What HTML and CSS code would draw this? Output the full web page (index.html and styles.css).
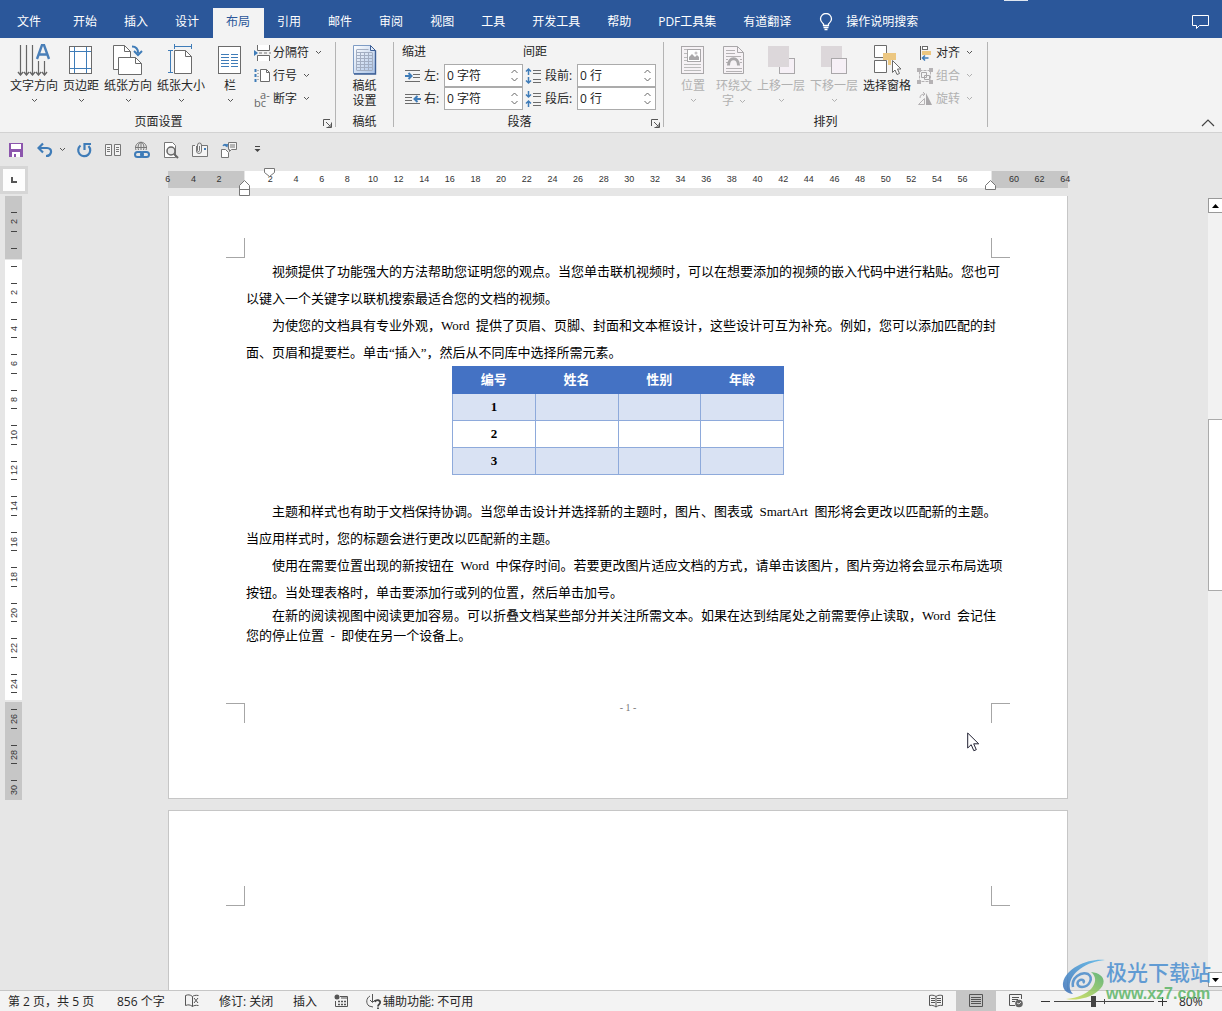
FILE: index.html
```html
<!DOCTYPE html>
<html lang="zh-CN">
<head>
<meta charset="utf-8">
<title>文档 - 布局</title>
<link rel="stylesheet" href="styles.css">
</head>
<body>
<svg class="defs" aria-hidden="true">
  <symbol id="chev" viewBox="0 0 7 5"><path d="M1 1l2.500 2.500L6 1" fill="none" stroke="currentColor"/></symbol>
  <symbol id="up" viewBox="0 0 7 5"><path d="M0.500 4l3-3 3 3" fill="none" stroke="currentColor"/></symbol>
  <symbol id="down" viewBox="0 0 7 5"><path d="M0.500 1l3 3 3-3" fill="none" stroke="currentColor"/></symbol>
  <symbol id="launch" viewBox="0 0 9 9"><path d="M0.500 7V0.500H7M3 3l4 4M8.500 3.500v5h-5M8 5v3H5" fill="none" stroke="#555"/></symbol>
</svg>

<header class="tabs">
  <nav class="tablist">
    <button class="tab file">文件</button>
    <button class="tab">开始</button>
    <button class="tab">插入</button>
    <button class="tab">设计</button>
    <button class="tab active">布局</button>
    <button class="tab">引用</button>
    <button class="tab">邮件</button>
    <button class="tab">审阅</button>
    <button class="tab">视图</button>
    <button class="tab">工具</button>
    <button class="tab">开发工具</button>
    <button class="tab">帮助</button>
    <button class="tab">PDF工具集</button>
    <button class="tab">有道翻译</button>
    <button class="tab tell"><svg width="14" height="18" viewBox="0 0 14 18"><path d="M4.500 12.500V11C3 9.500 1.500 8.500 1.500 6a5.500 5.500 0 0 1 11 0c0 2.500-1.500 3.500-3 5v1.500zM4.500 14.500h5M5.500 16.500h3" fill="none" stroke="#fff" stroke-width="1.300"/></svg>操作说明搜索</button>
  </nav>
  <button class="comment" aria-label="批注"><svg width="17" height="16" viewBox="0 0 17 16"><path d="M.500 1.500h16v10h-9l-3 3v-3h-4z" fill="none" stroke="#fff"/></svg></button>
  <span class="handle"></span>
</header>

<section class="ribbon">
  <div class="group setup">
    <div class="body">
      <button class="big"><svg width="34" height="32" viewBox="0 0 34 32"><g fill="none" stroke="#666"><path d="M3.500 1v30M9.500 1v30M15.500 1v30M21.500 17v14M27.500 17v14" stroke-width="1.200"/><path d="M1 28l2.500 3L6 28M7 28l2.500 3 2.500-3M13 28l2.500 3 2.500-3M19 28l2.500 3 2.500-3M25 28l2.500 3 2.500-3" stroke-width="1.400"/></g><path d="M20 15l5-14h2l5 14M22 10.500h8" fill="none" stroke="#4a7fb8" stroke-width="2.400"/></svg><span>文字方向</span><svg class="ch"><use href="#chev"/></svg></button>
      <button class="big"><svg width="24" height="32" viewBox="0 0 24 32"><rect x=".5" y="2.500" width="22" height="27" fill="#fff" stroke="#6b6b6b"/><path d="M5.500 3v26M17.500 3v26M1 7.500h21M1 24.500h21" stroke="#3f7cb8"/></svg><span>页边距</span><svg class="ch"><use href="#chev"/></svg></button>
      <button class="big"><svg width="30" height="32" viewBox="0 0 30 32"><g fill="#fff" stroke="#6b6b6b"><path d="M.500 1.500h11l6 6v18H.500z"/><path d="M11.500 1.500v6h6" fill="none"/><path d="M5.500 13.500h17l6 6v11h-23z"/><path d="M22.500 13.500v6h6" fill="none"/></g><path d="M19 2.500c4 0 6 1.500 6 6.500" fill="none" stroke="#3f7cb8" stroke-width="2"/><path d="M21 7l4 4 4-4" fill="none" stroke="#3f7cb8" stroke-width="2"/></svg><span>纸张方向</span><svg class="ch"><use href="#chev"/></svg></button>
      <button class="big"><svg width="26" height="32" viewBox="0 0 26 32"><path d="M6 2.500h18M6.500 0v5M23.500 0v5M2.500 6v22M0 6.500h5M0 28.500h5" stroke="#3f7cb8"/><path d="M6.500 6.500h11l6 6v17h-17z" fill="#fff" stroke="#6b6b6b"/><path d="M17.500 6.500v6h6" fill="none" stroke="#6b6b6b"/></svg><span>纸张大小</span><svg class="ch"><use href="#chev"/></svg></button>
      <button class="big narrow"><svg width="24" height="32" viewBox="0 0 24 32"><rect x=".5" y="2.500" width="22" height="27" fill="#fff" stroke="#6b6b6b"/><path d="M3 10.500h8M13 10.500h7M3 13.500h8M13 13.500h7M3 16.500h8M13 16.500h7M3 19.500h8M13 19.500h7M3 22.500h8M13 22.500h7" stroke="#3f7cb8"/></svg><span>栏</span><svg class="ch"><use href="#chev"/></svg></button>
      <div class="smalls">
        <button class="small"><svg width="17" height="16" viewBox="0 0 17 16"><path d="M3.500 0v5.500h12V0M3.500 16v-5.500h12V16" fill="#fff" stroke="#6b6b6b"/><path d="M0 5v6l4-3z" fill="#3f7cb8"/><path d="M5 8h3M10 8h3M15 8h2" stroke="#777"/></svg>分隔符<svg class="ch"><use href="#chev"/></svg></button>
        <button class="small"><svg width="17" height="16" viewBox="0 0 17 16"><path d="M6.500 1.500h6l3 3v9h-9z" fill="#fff" stroke="#6b6b6b"/><path d="M12.500 1.500v3h3" fill="none" stroke="#6b6b6b"/><path d="M1.500 1v14" stroke="#3f7cb8" stroke-dasharray="3 2" stroke-width="2"/><path d="M4 2v12" stroke="#777" stroke-dasharray="1 2"/></svg>行号<svg class="ch"><use href="#chev"/></svg></button>
        <button class="small"><span class="hyph" aria-hidden="true"><span>a-</span><span>bc</span></span>断字<svg class="ch"><use href="#chev"/></svg></button>
      </div>
    </div>
    <footer>页面设置<button class="launch" aria-label="页面设置选项"><svg width="9" height="9"><use href="#launch"/></svg></button></footer>
  </div>
  <div class="group paper">
    <div class="body">
      <button class="big"><svg width="26" height="32" viewBox="0 0 26 32"><defs><linearGradient id="pg" x1="0" y1="0" x2="1" y2="1"><stop offset="0" stop-color="#fff"/><stop offset="1" stop-color="#a9c2e6"/></linearGradient></defs><path d="M1.500 1.500h17l5 5v23h-22z" fill="url(#pg)" stroke="#7f9cc4"/><path d="M23.500 6.500v23.500H2" fill="none" stroke="#3d5f96" stroke-width="1.400"/><path d="M18.500 1.500v5h5z" fill="#dfe9f7" stroke="#3d5f96"/><path d="M4.500 5.500h12M4.500 8.500h16M4.500 11.500h16M4.500 14.500h16M4.500 17.500h16M4.500 20.500h16M4.500 23.500h16M4.500 26.500h16M4.500 6v20M8.500 9v17M12.500 9v17M16.500 9v17M20.500 9v17" stroke="#a3aec2" fill="none"/></svg><span>稿纸<br>设置</span></button>
    </div>
    <footer>稿纸</footer>
  </div>
  <div class="group para">
    <div class="body">
      <div class="spin-col">
        <h3>缩进</h3>
        <div class="spin-row"><svg width="18" height="16" viewBox="0 0 18 16"><path d="M1 2.500h15M9 6.500h7M9 9.500h7M1 13.500h15" stroke="#6b6b6b"/><path d="M1 8h6M4.500 5l3 3-3 3" fill="none" stroke="#3f7cb8" stroke-width="2"/></svg><label for="il">左:</label><span class="spin"><input id="il" value="0 字符"><span><svg><use href="#up"/></svg><svg><use href="#down"/></svg></span></span></div>
        <div class="spin-row"><svg width="18" height="16" viewBox="0 0 18 16"><path d="M1 3.500h15M1 6.500h7M1 9.500h7M1 12.500h15" stroke="#6b6b6b"/><path d="M17 8h-6M13.500 5l-3 3 3 3" fill="none" stroke="#3f7cb8" stroke-width="2"/></svg><label for="ir">右:</label><span class="spin"><input id="ir" value="0 字符"><span><svg><use href="#up"/></svg><svg><use href="#down"/></svg></span></span></div>
      </div>
      <div class="spin-col wide">
        <h3>间距</h3>
        <div class="spin-row"><svg width="18" height="18" viewBox="0 0 18 18"><path d="M8 3.500h8M8 6.500h8M8 12.500h8M8 15.500h8" stroke="#6b6b6b"/><path d="M3.500 8V2M1 4.500L3.500 2 6 4.500M3.500 10v6M1 13.500L3.500 16 6 13.500" fill="none" stroke="#3f7cb8" stroke-width="1.500"/></svg><label for="sb">段前:</label><span class="spin"><input id="sb" value="0 行"><span><svg><use href="#up"/></svg><svg><use href="#down"/></svg></span></span></div>
        <div class="spin-row"><svg width="18" height="18" viewBox="0 0 18 18"><path d="M8 3.500h8M8 6.500h8M8 12.500h8M8 15.500h8" stroke="#6b6b6b"/><path d="M3.500 1v6M1 4.500L3.500 7 6 4.500M3.500 17v-6M1 13.500L3.500 11 6 13.500" fill="none" stroke="#3f7cb8" stroke-width="1.500"/></svg><label for="sa">段后:</label><span class="spin"><input id="sa" value="0 行"><span><svg><use href="#up"/></svg><svg><use href="#down"/></svg></span></span></div>
      </div>
    </div>
    <footer>段落<button class="launch" aria-label="段落选项"><svg width="9" height="9"><use href="#launch"/></svg></button></footer>
  </div>
  <div class="group arrange">
    <div class="body">
      <button class="big" disabled><svg width="24" height="32" viewBox="0 0 24 32"><rect x=".5" y="2.500" width="22" height="27" fill="#f6f2f5" stroke="#a9a7a9"/><path d="M3 5.500h3M17 5.500h3M3 20.500h17M3 23.500h17M3 26.500h17M3 9.500h3M3 13.500h3M3 16.500h3" stroke="#bbb"/><rect x="6.500" y="5.500" width="13" height="12" fill="#fff" stroke="#a9a7a9"/><path d="M8 16v-3l3-3 3 3 2-2 2 2v3z" fill="#a9a7a9"/><circle cx="15" cy="9" r="1.500" fill="#c5c2c4"/></svg><span>位置</span><svg class="ch"><use href="#chev"/></svg></button>
      <button class="big" disabled><svg width="24" height="32" viewBox="0 0 24 32"><path d="M1.500 2.500h14l6 6v21h-20z" fill="#f6f2f5" stroke="#a9a7a9"/><path d="M15.500 2.500v6h6" fill="none" stroke="#a9a7a9"/><path d="M4 6.500h9M4 9.500h9M4 12.500h15M4 15.500h2M18 15.500h2M4 18.500h2M18 18.500h2M4 24.500h16M4 27.500h16" stroke="#b5b2b4"/><path d="M6.500 21.500c0-9 10-9 10 0" fill="none" stroke="#a9a7a9" stroke-width="3"/></svg><span>环绕文<br>字 <svg class="ch"><use href="#chev"/></svg></span></button>
      <button class="big" disabled><svg width="28" height="32" viewBox="0 0 28 32"><rect x="12.500" y="14.500" width="15" height="15" fill="#f6f0f6" stroke="#a9a7a9"/><path d="M1 2h21v21H1z" fill="#dcd7da"/></svg><span>上移一层</span><svg class="ch"><use href="#chev"/></svg></button>
      <button class="big" disabled><svg width="28" height="32" viewBox="0 0 28 32"><path d="M1 2h21v21H1z" fill="#dcd7da"/><rect x="11.500" y="14.500" width="15" height="15" fill="#f6f0f6" stroke="#a9a7a9"/></svg><span>下移一层</span><svg class="ch"><use href="#chev"/></svg></button>
      <button class="big"><svg width="28" height="32" viewBox="0 0 28 32"><path d="M1.500 1.500h12v12h-12zM1.500 16.500h12v12h-12z" fill="#fff" stroke="#6b6b6b"/><path d="M10 9h13v7h-5v5h-3v-5h-5z" fill="#ecc781"/><path d="M19.500 16.500v12l2.500-2.500 2 4.500 2.500-1-2-4.500h3.500z" fill="#fff" stroke="#6b6b6b"/></svg><span>选择窗格</span></button>
      <div class="smalls">
        <button class="small"><svg width="17" height="16" viewBox="0 0 17 16"><path d="M3.500 1v14" stroke="#555"/><rect x="5.500" y="1.500" width="5" height="3" fill="#fff" stroke="#6b6b6b"/><path d="M5 6h9v4H5z" fill="#ecc781"/><path d="M5.500 13h6M8 10.500L5.500 13 8 15.500" fill="none" stroke="#3f7cb8" stroke-width="1.500"/></svg>对齐<svg class="ch"><use href="#chev"/></svg></button>
        <button class="small" disabled><svg width="17" height="16" viewBox="0 0 17 16"><path d="M2.500 2.500h11v11h-11z" fill="none" stroke="#b5b2b4" stroke-dasharray="3 1"/><path d="M4.500 4.500h5v5h-5zM7.500 7.500h5v4h-5z" fill="#f3f3f3" stroke="#a9a7a9"/><path d="M0 0h4v4H0zM12 0h4v4h-4zM0 12h4v4H0zM12 12h4v4h-4z" fill="#b5b2b4"/></svg>组合<svg class="ch"><use href="#chev"/></svg></button>
        <button class="small" disabled><svg width="17" height="16" viewBox="0 0 17 16"><path d="M1.500 13.500h6v-6zM3 7c0-3 2-4 5-4M6 1l2 2-2 2" fill="none" stroke="#b5b2b4"/><path d="M9 2v12h6z" fill="#a9a7a9"/></svg>旋转<svg class="ch"><use href="#chev"/></svg></button>
      </div>
    </div>
    <footer>排列</footer>
  </div>
  <button class="collapse" aria-label="折叠功能区"><svg width="14" height="8" viewBox="0 0 14 8"><path d="M1 7l6-6 6 6" fill="none" stroke="#444" stroke-width="1.200"/></svg></button>
</section>

<div class="qat">
  <button aria-label="保存"><svg width="16" height="16" viewBox="0 0 16 16"><path d="M1 1h14v14H1z" fill="#8c56ad"/><path d="M3 2h10v5H3zM4 10h8v5H4z" fill="#fff"/><path d="M6 12h2v3H6z" fill="#8c56ad"/></svg></button>
  <button aria-label="撤消"><svg width="16" height="16" viewBox="0 0 16 16"><path d="M2 6h8c6 0 5 8-1 8M6 1.500L1.500 6 6 10.500" fill="none" stroke="#3f7cb8" stroke-width="2.200"/></svg></button>
  <button class="mini" aria-label="撤消列表"><svg class="ch"><use href="#chev"/></svg></button>
  <button class="redo" aria-label="重复"><svg width="16" height="16" viewBox="0 0 16 16"><path d="M4.500 3.500A6 6 0 1 0 12.500 4M8.500 8V2H15" fill="none" stroke="#3f7cb8" stroke-width="2.200"/></svg></button>
  <button aria-label="双页"><svg width="16" height="16" viewBox="0 0 16 16"><path d="M.500 2.500h6v11h-6zM9.500 2.500h6v11h-6z" fill="#f4f4f4" stroke="#777"/><path d="M2 5.500h3M2 7.500h3M2 9.500h3M11 5.500h3M11 7.500h3M11 9.500h3" stroke="#777"/></svg></button>
  <button aria-label="超链接"><svg width="16" height="18" viewBox="0 0 16 18"><g fill="none"><path d="M2 9a5.500 5.500 0 1 1 10 0M7 1v8M1 6.500h12M4.500 9c-1-4 0-7 2.500-7.500C9.500 2 10.500 5 9.500 9" stroke="#777"/><rect x="1" y="11" width="8" height="5" rx="2.500" stroke="#3f7cb8" stroke-width="2"/><rect x="7" y="11" width="8" height="5" rx="2.500" stroke="#3f7cb8" stroke-width="2"/></g></svg></button>
  <button aria-label="打印预览"><svg width="16" height="18" viewBox="0 0 16 18"><path d="M1.500 1.500h8l3 3v12h-11z" fill="#fff" stroke="#777"/><circle cx="8" cy="10" r="4" fill="#e6e6e6" stroke="#666" stroke-width="1.500"/><path d="M11 13l4 4" stroke="#666" stroke-width="2"/></svg></button>
  <button aria-label="附件"><svg width="16" height="16" viewBox="0 0 16 16"><path d="M3 3.500H.500v11h15v-11H10" fill="#f4f4f4" stroke="#777"/><path d="M4.500 4v5a2.500 2.500 0 0 0 5 0V3a2 2 0 0 0-4 0v5.500a1 1 0 0 0 2 0V4" fill="none" stroke="#777"/><path d="M12 6h2v2h-2z" fill="#3f7cb8"/></svg></button>
  <button aria-label="切换"><svg width="16" height="16" viewBox="0 0 16 16"><path d="M7.500.500h8v7h-5l-2 2v-2h-1z" fill="#f4f4f4" stroke="#777"/><path d="M9 3h5M9 5h5" stroke="#777"/><path d="M.500 7.500h4l3 3v5h-7z" fill="#fff" stroke="#777"/><path d="M2 4c1-2 3-2 4 0M3.500 3L6 4.500 6.500 2" fill="none" stroke="#3f7cb8" stroke-width="1.300"/></svg></button>
  <button class="more" aria-label="自定义快速访问工具栏"><svg width="7" height="7" viewBox="0 0 7 7"><path d="M1 .500h5" stroke="#444"/><path d="M.500 3h6l-3 3z" fill="#444"/></svg></button>
</div>

<main class="work">
  <button class="corner" aria-label="制表符"><svg width="6" height="6"><path d="M1 0v5h5" fill="none" stroke="#555" stroke-width="2"/></svg></button>
  <div class="hwrap">
    <div class="hruler">
      <div class="hseg"><i></i><b></b><i></i></div>
      <div class="hnums"><span>6</span><span>4</span><span>2</span><span></span><span>2</span><span>4</span><span>6</span><span>8</span><span>10</span><span>12</span><span>14</span><span>16</span><span>18</span><span>20</span><span>22</span><span>24</span><span>26</span><span>28</span><span>30</span><span>32</span><span>34</span><span>36</span><span>38</span><span>40</span><span>42</span><span>44</span><span>46</span><span>48</span><span>50</span><span>52</span><span>54</span><span>56</span><span></span><span>60</span><span>62</span><span>64</span></div>
      <svg class="mark first" width="11" height="9" viewBox="0 0 11 9"><path d="M.500.500h10v4l-5 4-5-4z" fill="#fff" stroke="#777"/></svg>
      <svg class="mark hang" width="11" height="16" viewBox="0 0 11 16"><path d="M.500 15.500v-10l5-5 5 5v10zM.500 9.500h10" fill="#fff" stroke="#777"/></svg>
      <svg class="mark right" width="11" height="10" viewBox="0 0 11 10"><path d="M.500 9.500v-4l5-5 5 5v4z" fill="#fff" stroke="#777"/></svg>
    </div>
  </div>
  <div class="vruler"><div class="vnums"><div><span>2</span></div><div></div><div><span>2</span></div><div><span>4</span></div><div><span>6</span></div><div><span>8</span></div><div><span>10</span></div><div><span>12</span></div><div><span>14</span></div><div><span>16</span></div><div><span>18</span></div><div><span>20</span></div><div><span>22</span></div><div><span>24</span></div><div><span>26</span></div><div><span>28</span></div><div><span>30</span></div></div></div>
  <div class="pages">
    <article class="page one">
      <div class="crops top"><i></i><i></i></div>
      <div class="text">
        <p>视频提供了功能强大的方法帮助您证明您的观点。当您单击联机视频时，可以在想要添加的视频的嵌入代码中进行粘贴。您也可<br>以键入一个关键字以联机搜索最适合您的文档的视频。</p>
        <p>为使您的文档具有专业外观，Word&ensp;提供了页眉、页脚、封面和文本框设计，这些设计可互为补充。例如，您可以添加匹配的封<br>面、页眉和提要栏。单击“插入”，然后从不同库中选择所需元素。</p>
        <table>
          <thead><tr><th>编号</th><th>姓名</th><th>性别</th><th>年龄</th></tr></thead>
          <tbody>
            <tr><th>1</th><td></td><td></td><td></td></tr>
            <tr><th>2</th><td></td><td></td><td></td></tr>
            <tr><th>3</th><td></td><td></td><td></td></tr>
          </tbody>
        </table>
        <p>主题和样式也有助于文档保持协调。当您单击设计并选择新的主题时，图片、图表或&ensp;SmartArt&ensp;图形将会更改以匹配新的主题。<br>当应用样式时，您的标题会进行更改以匹配新的主题。</p>
        <p>使用在需要位置出现的新按钮在&ensp;Word&ensp;中保存时间。若要更改图片适应文档的方式，请单击该图片，图片旁边将会显示布局选项<br>按钮。当处理表格时，单击要添加行或列的位置，然后单击加号。</p>
        <p class="tight">在新的阅读视图中阅读更加容易。可以折叠文档某些部分并关注所需文本。如果在达到结尾处之前需要停止读取，Word&ensp;会记住<br>您的停止位置&ensp;-&ensp;即使在另一个设备上。</p>
      </div>
      <div class="crops bottom"><i></i><span>- 1 -</span><i></i></div>
    </article>
    <article class="page two"><div class="crops top"><i></i><i></i></div></article>
    <svg class="pointer" width="13" height="20" viewBox="0 0 13 20"><path d="M.700 1v15l3.500-3.300 2.600 6 2.500-1-2.600-5.900h5z" fill="#fff" stroke="#223"/></svg>
  </div>
  <div class="scroll">
    <button aria-label="向上滚动"><svg width="7" height="4"><path d="M0 4l3.500-4L7 4z"/></svg></button>
    <div class="track"><i class="before"></i><i class="thumb"></i><i class="after"></i></div>
    <button aria-label="向下滚动"><svg width="7" height="4"><path d="M0 0l3.500 4L7 0z"/></svg></button>
  </div>
  <div class="brand">
    <svg width="44" height="42" viewBox="0 0 44 42"><defs><linearGradient id="g1" x1="0" y1="1" x2="1" y2="0"><stop offset="0" stop-color="#3c6fb6"/><stop offset="1" stop-color="#55b7ea"/></linearGradient><linearGradient id="g2" x1="0" y1="1" x2="1" y2="0"><stop offset="0" stop-color="#d5e04f"/><stop offset="1" stop-color="#4fae6d"/></linearGradient></defs><path d="M43 1C28-1 4 8 1 24c-1 7 5 11 10 11-7-7-2-19 7-25C26 4 34 2 43 1z" fill="url(#g1)"/><path d="M29 13c13 1 17 11 7 19C28 39 14 42 4 40c12-1 20-5 25-10 5-6 6-12 0-17z" fill="url(#g2)"/><path d="M11 28c-2-9 8-16 15-13 6 4 1 13-6 13-5 0-6-5-2-7 3-1 5 1 3 3" fill="none" stroke="#4a8ccb" stroke-width="2.500"/></svg>
    <div><strong>极光下载站</strong><a href="#">www.xz7.com</a></div>
  </div>
</main>

<footer class="status">
  <span class="s-page">第 2 页，共 5 页</span>
  <span class="s-words">856 个字</span>
  <svg width="15" height="14" viewBox="0 0 15 14"><path d="M7.500 2.500C5 .500 3 .500.500 1.500v10c2.500-1 4.500-1 7 1 1.500-1 3-1.500 6-1M7.500 2.500v10M7.500 2.500c1-1 3-1.500 6-1M9 4l4 5M13 4L9 9" fill="none" stroke="#555"/></svg>
  <span class="s-track">修订: 关闭</span>
  <span class="s-ins">插入</span>
  <svg width="14" height="14" viewBox="0 0 14 14"><circle cx="3" cy="3" r="2.500" fill="#555"/><path d="M6 2.500h7.500v10H1.500V7M7 4h6" fill="none" stroke="#555"/><path d="M4 7.500h8M4 10.500h8" stroke="#555" stroke-width="1.500" stroke-dasharray="2 1"/></svg>
  <span class="s-acc"><svg width="17" height="15" viewBox="0 0 17 15"><path d="M5 2A6 6 0 0 0 4 12l4 1M7.500 0v8M5 6l2.500 2.500L10 6" fill="none" stroke="#555"/><path d="M10 8c1-3 6-2 5 1-.500 1.500-2 1.500-2 3.500M13 13.500v1.500" fill="none" stroke="#444" stroke-width="1.800"/></svg>辅助功能: 不可用</span>
  <div class="views">
    <button aria-label="阅读视图"><svg width="14" height="14" viewBox="0 0 14 14"><path d="M7 2.500C5 1 3 1 .500 1.500v10c2.500-.500 4.500 0 6.500 1.500 2-1.500 4-2 6.500-1.500v-10C11 1 9 1 7 2.500zM7 2.500V13M2 4.500h4M2 6.500h4M2 8.500h4M8 4.500h4M8 6.500h4M8 8.500h4" fill="none" stroke="#555"/></svg></button>
    <button class="on" aria-label="页面视图"><svg width="14" height="14" viewBox="0 0 14 14"><path d="M.500.500h13v12H.500zM2 3.500h10M2 5.500h10M2 7.500h10M2 9.500h10" fill="none" stroke="#555"/></svg></button>
    <button aria-label="Web 版式视图"><svg width="14" height="14" viewBox="0 0 14 14"><path d="M6 11.500H.500V.500h12V5M3 3.500h7M3 5.500h6M3 7.500h3" fill="none" stroke="#555"/><circle cx="10" cy="9.500" r="3.800" fill="#666"/><path d="M8 9l2 1 2-2" stroke="#ddd" fill="none"/></svg></button>
  </div>
  <button class="zoom" aria-label="缩小"><svg width="9" height="9"><path d="M0 4.500h9" stroke="#333"/></svg></button>
  <input class="slider" type="range" min="0" max="100" value="39" aria-label="显示比例">
  <button class="zoom" aria-label="放大"><svg width="9" height="9"><path d="M0 4.500h9M4.500 0v9" stroke="#333"/></svg></button>
  <span class="pct">80%</span>
</footer>
</body>
</html>
```
FILE: styles.css
```css
* { box-sizing: border-box; }
html, body { margin: 0; height: 100%; }
body {
  display: flex; flex-direction: column; min-height: 100vh; overflow: hidden;
  font: 12px/15px "Open Sans", "Noto Sans CJK SC", sans-serif;
  color: #262626; background: #e6e6e6;
}
button { font: inherit; color: inherit; background: none; border: 0; padding: 0; margin: 0; }
svg { display: block; flex: none; }
.defs { position: absolute; width: 0; height: 0; }
.ch { width: 7px; height: 5px; color: #555; }

/* tabs */
.tabs { position: relative; display: flex; justify-content: space-between; height: 38px; background: #2b579a; color: #fff; }
.tablist { display: flex; padding-top: 8px; white-space: nowrap; }
.tab { padding: 0 14px 3px 13px; }
.tab.file { padding: 0 19px 3px 17px; }
.tab.active { background: #f3f3f3; color: #2b579a; }
.tab.tell { display: flex; align-items: center; gap: 13px; padding-left: 14px; }
.comment { padding: 6px 13px 0 0; }
.handle { position: absolute; right: 194px; top: 0; width: 24px; height: 1px; background: #dfe6f0; }

/* ribbon */
.ribbon { display: flex; padding: 4px 0 5px; background: #f3f3f3; border-bottom: 1px solid #d2d2d2; }
.group { display: flex; flex-direction: column; border-right: 1px solid #b4b4b4; flex: none; }
.group footer { display: flex; justify-content: center; line-height: 14px; position: relative; height: 12px; }
.body { display: flex; height: 73px; padding-top: 2px; }
.setup { width: 336px; }
.paper { width: 58px; }
.para { width: 270px; }
.arrange { width: 324px; }
.setup .body { padding-left: 8px; gap: 1px; }
.paper .body { justify-content: center; }
.para .body { padding-left: 8px; }
.arrange .body { padding-left: 9px; gap: 1px; }
.setup footer, .para footer { padding-right: 18px; }
.launch { position: absolute; right: 3px; bottom: -1px; }
.big { display: flex; flex-direction: column; align-items: center; padding: 0 2px; min-width: 40px; white-space: nowrap; }
.big > svg:first-child { margin-bottom: 2px; }
.big > .ch { margin-top: 5px; }
.big span .ch { display: inline-block; vertical-align: middle; margin-left: 2px; }
.big.narrow { min-width: 44px; }
button:disabled, button:disabled .ch { color: #b1b1b1; }
.smalls { display: flex; flex-direction: column; padding-left: 1px; margin-top: -3px; }
.arrange .smalls { padding-left: 3px; }
.small { display: flex; align-items: center; height: 23px; gap: 2px; }
.small .ch { margin-left: 4px; }
.hyph { display: flex; flex-direction: column; width: 17px; font: 11px/8px "Open Sans", sans-serif; color: #666; text-align: left; }
.hyph span:first-child { padding-left: 6px; }
h3 { margin: 0 0 5px; font: inherit; }
.spin-row { display: flex; align-items: center; gap: 2px; height: 23px; padding-left: 2px; }
.spin-row label { width: 18px; white-space: nowrap; }
.wide .spin-row label { width: 30px; }
.spin { display: flex; width: 79px; height: 23px; border: 1px solid #ababab; background: #fff; }
.spin input { flex: 1; min-width: 0; border: 0; padding: 0 0 0 2px; background: none; font: inherit; color: #222; outline: 0; }
.spin > span { display: flex; flex-direction: column; justify-content: space-around; padding: 2px 4px 2px 0; color: #666; }
.spin svg { width: 7px; height: 5px; }
.collapse { margin: auto 7px 0 auto; }

/* quick access toolbar */
.qat { display: flex; align-items: center; height: 33px; padding-left: 8px; gap: 13px; flex: none; }
.mini { margin: 0 -3px 0 -7px; }
.more { margin-left: 4px; }

/* work area */
.work { position: relative; flex: 1; min-height: 0; display: grid; grid-template: 30px minmax(0, 1fr) / 28px 1fr 14px; }
.corner { width: 28px; height: 28px; border: 3px solid #d6d6d6; background: #fdfdfd; display: grid; place-content: center; }
.hwrap { display: flex; justify-content: center; padding-top: 5px; }
.hruler { position: relative; width: 900px; height: 17px; display: grid; }
.hseg, .hnums { grid-area: 1 / 1; }
.hseg { display: flex; gap: 1px; }
.hseg i { width: 76px; background: #c6c6c6; }
.hseg b { flex: 1; background: #fff; }
.hnums { display: grid; grid-template-columns: repeat(36, 1fr); margin: 0 -10px 0 -13px; text-align: center; font: 9px/17px "Liberation Sans", sans-serif; color: #333; }
.mark { position: absolute; }
.first { left: 96px; top: -3px; }
.hang { left: 71px; top: 9px; }
.right { right: 72px; top: 9px; }
.vruler { grid-row: 2; grid-column: 1; width: 17px; height: 604px; margin-left: 5px; padding-top: 8px; overflow: hidden; background: linear-gradient(#c6c6c6 63px, #e6e6e6 63px 64px, #fff 64px 504px, #e6e6e6 504px 506px, #c6c6c6 506px); }
.vnums { height: 604px; display: grid; grid-template-rows: repeat(17, 1fr); font: 9px/12px "Liberation Sans", sans-serif; color: #333; }
.vnums div { display: grid; grid-template-rows: 9px 1fr 9px; justify-items: center; align-items: center; }
.vnums div::before, .vnums div::after { content: ""; width: 6px; height: 1px; background: #444; }
.vnums div::before { grid-row: 1; align-self: end; }
.vnums div::after { grid-row: 3; align-self: start; }
.vnums div:last-child::after { visibility: hidden; }
.vnums span { grid-row: 2; writing-mode: vertical-rl; transform: rotate(180deg); }
.pages { grid-row: 2; grid-column: 2; position: relative; display: flex; flex-direction: column; align-items: center; gap: 11px; min-height: 0; overflow: hidden; }
.page { width: 900px; background: #fff; border: 1px solid #c6c6c6; padding: 0 57px; flex: none; }
.one { border-top: 0; padding-top: 42px; padding-bottom: 75px; }
.two { flex: 1; border-bottom: 0; padding-top: 75px; }
.crops { display: flex; justify-content: space-between; height: 20px; }
.crops i { width: 19px; border: 0 solid #a6a6a6; }
.crops i:first-child { border-right-width: 1px; }
.crops i:last-child { border-left-width: 1px; }
.top i { border-bottom-width: 1px; }
.bottom i { border-top-width: 1px; }
.crops span { padding-left: 20px; font: 10px/10px "Liberation Serif", serif; color: #777; }
.text { padding: 0 20px 57px; font-family: "Liberation Serif", "Noto Sans CJK SC", serif; font-size: 13px; line-height: 27px; color: #000; white-space: nowrap; }
.text p { margin: 0; text-indent: 26px; }
.text .tight { line-height: 20px; }
table { width: 332px; margin: 0 auto 23px; border-collapse: collapse; table-layout: fixed; }
th, td { height: 27px; padding: 0; border: 1px solid #8eaadb; line-height: 26px; }
thead th { background: #4472c4; border-color: #4472c4; color: #fff; }
tbody tr:nth-child(odd) { background: #d9e2f3; }
.pointer { position: absolute; left: 939px; top: 536px; }

/* scroll bar */
.scroll { grid-row: 2; grid-column: 3; display: flex; flex-direction: column; padding: 2px 0 3px; }
.scroll button { height: 15px; display: grid; place-content: center; background: #fff; border: 1px solid #999; border-right: 0; }
.track { flex: 1; display: flex; flex-direction: column; background: #f2f2f2; }
.before { flex: 207; }
.thumb { flex: 170; background: #fff; border: 1px solid #ababab; border-right: 0; }
.after { flex: 383; }

/* site mark */
.brand { position: absolute; right: 11px; bottom: -14px; z-index: 1; display: flex; opacity: .85; }
.brand div { display: flex; flex-direction: column; }
.brand strong { font: 500 21px/25px "Noto Sans CJK SC", sans-serif; color: #4a8fd0; }
.brand a { font: bold 16px/20px "Liberation Sans", sans-serif; color: #5cb567; text-decoration: none; }

/* status bar */
.status { display: flex; align-items: center; height: 21px; flex: none; padding-left: 8px; background: #f3f3f3; border-top: 1px solid #c6c6c6; white-space: nowrap; }
.s-page { width: 109px; }
.s-words { width: 68px; }
.s-track { width: 74px; margin-left: 19px; }
.s-ins { width: 41px; }
.s-acc { display: flex; align-items: center; margin-left: 17px; gap: 1px; }
.views { display: flex; margin-left: auto; align-self: stretch; margin-right: 5px; }
.views button { width: 40px; display: grid; place-content: center; }
.views .on { background: #c6c6c6; }
.slider { appearance: none; width: 100px; height: 15px; margin: 0 4px; background: linear-gradient(#444, #444) center / 100% 1px no-repeat, linear-gradient(#444, #444) center / 1px 5px no-repeat; }
.slider::-webkit-slider-thumb { appearance: none; width: 5px; height: 11px; background: #444; border: 0; }
.pct { width: 43px; margin-left: 12px; }
```
